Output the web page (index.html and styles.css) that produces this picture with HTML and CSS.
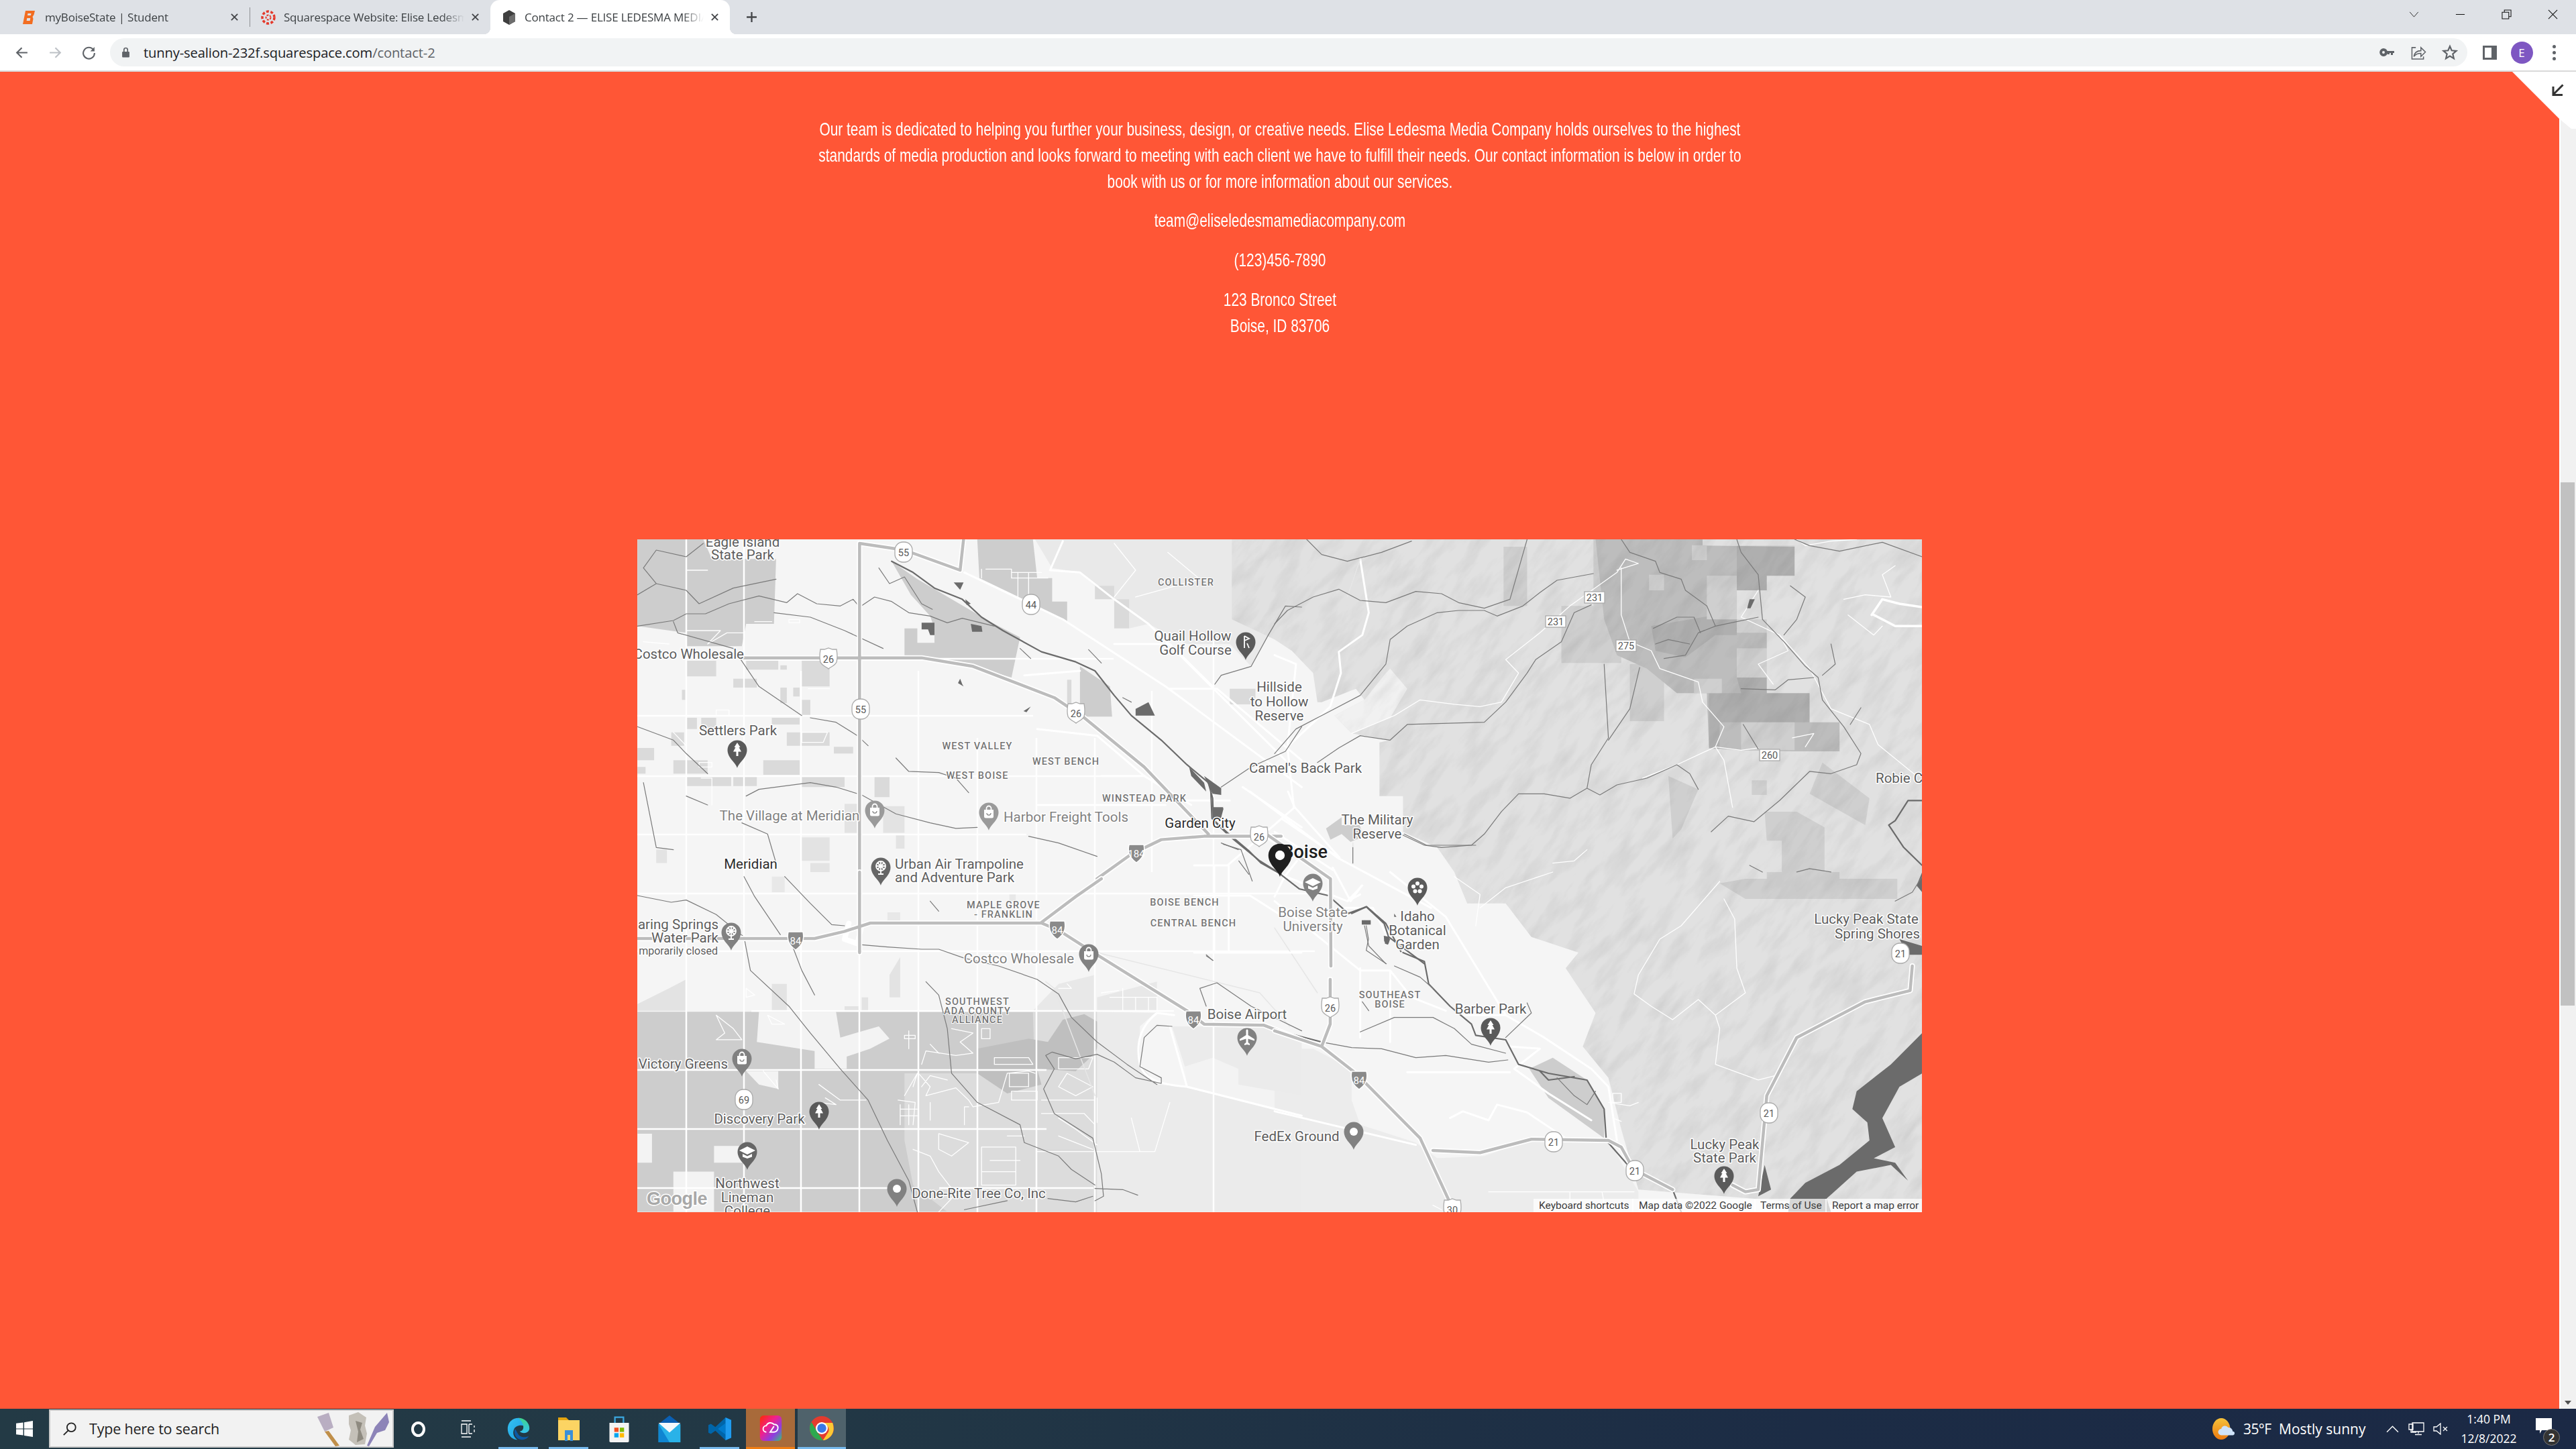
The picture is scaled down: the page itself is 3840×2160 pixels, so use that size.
FILE: index.html
```html
<!DOCTYPE html>
<html lang="en">
<head>
<meta charset="utf-8">
<title>Contact 2 — ELISE LEDESMA MEDIA COMPANY</title>
<link rel="stylesheet" href="styles.css">
</head>
<body>
<div class="screen">
  <header class="tabstrip">
    <div class="tab">
      <svg class="favicon" viewBox="0 0 24 24"><path class="fav-b" d="M6 2h14l-1.500 6-2 3 1 3-1.500 8H2z"/><path class="fav-hole" d="M9.500 6h5l-.6 3h-5zM8.300 13h5l-.7 4h-5z"/></svg>
      <span class="tab-title">myBoiseState | Student</span>
      <svg class="tab-close" viewBox="0 0 14 14"><path d="M2 2l10 10M12 2L2 12"/></svg>
    </div>
    <div class="tab tab-second">
      <svg class="favicon" viewBox="0 0 24 24"><g class="fav-canvas"><circle cx="12" cy="12" r="9" fill="none" stroke-dasharray="4 2.500" stroke-width="3.500"/><circle cx="12" cy="12" r="3.500" fill="none" stroke-dasharray="3 1.500" stroke-width="2"/></g></svg>
      <span class="tab-title">Squarespace Website: Elise Ledesma Media</span>
      <svg class="tab-close" viewBox="0 0 14 14"><path d="M2 2l10 10M12 2L2 12"/></svg>
    </div>
    <div class="tab tab-active">
      <svg class="favicon" viewBox="0 0 24 24"><path class="cube-a" d="M12 1l9 5v12l-9 5-9-5V6z"/><path class="cube-b" d="M12 11l9-5v12l-9 5z"/></svg>
      <span class="tab-title">Contact 2 — ELISE LEDESMA MEDIA COMPANY</span>
      <svg class="tab-close" viewBox="0 0 14 14"><path d="M2 2l10 10M12 2L2 12"/></svg>
    </div>
    <svg class="new-tab" viewBox="0 0 16 16"><path d="M8 1v14M1 8h14"/></svg>
    <div class="win-controls">
      <div class="win-cell"><svg viewBox="0 0 16 10" class="win-ic win-chev"><path d="M1 1l7 8 7-8"/></svg></div>
      <div class="win-cell"><svg viewBox="0 0 16 16" class="win-ic"><path d="M1 8h14"/></svg></div>
      <div class="win-cell"><svg viewBox="0 0 16 16" class="win-ic"><path d="M1 4.500h10.500V15H1zM4.500 4.500V1H15v10.500h-3.500"/></svg></div>
      <div class="win-cell"><svg viewBox="0 0 16 16" class="win-ic"><path d="M1 1l14 14M15 1L1 15"/></svg></div>
    </div>
  </header>

  <nav class="toolbar">
    <div class="nav-cell"><svg viewBox="0 0 20 20" class="nav-ic"><path d="M18 10H3M10 3l-7 7 7 7"/></svg></div>
    <div class="nav-cell"><svg viewBox="0 0 20 20" class="nav-ic nav-off"><path d="M2 10h15M10 3l7 7-7 7"/></svg></div>
    <div class="nav-cell"><svg viewBox="0 0 20 20" class="nav-ic"><path d="M16.500 6A8 8 0 1 0 18 10.500"/><path class="nav-solid" d="M18 2v6h-6z"/></svg></div>
    <div class="omnibox">
      <svg class="lock" viewBox="0 0 12 16"><path d="M2 7h8a1 1 0 0 1 1 1v6a1 1 0 0 1-1 1H2a1 1 0 0 1-1-1V8a1 1 0 0 1 1-1z"/><path class="lock-arc" d="M3.500 7V4.500a2.500 2.500 0 0 1 5 0V7"/></svg>
      <span class="url"><span class="url-host">tunny-sealion-232f.squarespace.com</span>/contact-2</span>
      <div class="omni-icons">
        <div class="omni-cell"><svg viewBox="0 0 22 12" class="ic-key"><path fill-rule="evenodd" d="M6 0a6 6 0 0 1 5.700 4H22v3h-2v3h-3V7h-2v2h-3V7.600A6 6 0 1 1 6 0zm0 4a2 2 0 1 0 0 4 2 2 0 0 0 0-4z"/></svg></div>
        <div class="omni-cell"><svg viewBox="0 0 24 22" class="ic-line"><path d="M8 3H2v18h18v-4M5 17c1-6 5-9 11-9V3l7 7-7 7v-5c-5 0-8 1-11 5z"/></svg></div>
        <div class="omni-cell"><svg viewBox="0 0 24 24" class="ic-star"><path d="M12 3l2.700 6.300 6.800.6-5.200 4.500 1.600 6.700-5.900-3.600-5.900 3.600 1.600-6.700L2.500 9.900l6.800-.6z"/></svg></div>
      </div>
    </div>
    <div class="tool-cell"><svg viewBox="0 0 21 21" class="ic-panel"><path fill-rule="evenodd" d="M0 0h21v21H0zM3 3v15h10V3z"/></svg></div>
    <div class="tool-cell"><span class="avatar">E</span></div>
    <div class="tool-cell"><span class="dots"><i></i><i></i><i></i></span></div>
  </nav>

  <div class="viewport">
    <main class="page">
      <section class="copy">
        <p>Our team is dedicated to helping you further your business, design, or creative needs. Elise Ledesma Media Company holds ourselves to the highest<br>standards of media production and looks forward to meeting with each client we have to fulfill their needs. Our contact information is below in order to<br>book with us or for more information about our services.</p>
        <p>team@eliseledesmamediacompany.com</p>
        <p>(123)456-7890</p>
        <p>123 Bronco Street<br>Boise, ID 83706</p>
      </section>
      <svg class="map" viewBox="950 804 1915 1003" xmlns="http://www.w3.org/2000/svg">
        <defs>
          <filter id="relief" x="-300" y="-300" width="4000" height="3000" filterUnits="userSpaceOnUse">
            <feTurbulence type="fractalNoise" baseFrequency=".016 .05" numOctaves="4" seed="7"/>
            <feColorMatrix type="matrix" values="0 0 0 0 0  0 0 0 0 0  0 0 0 0 0  1.500 0 0 0 -.62"/>
          </filter>
          <clipPath id="hillclip">
            <path transform="translate(1900 790) scale(.638 .3333)" d="M-100,42L1513,42L1513,1530L420,1530L380,1420L300,1350L300,1190L245,1190L245,950L270,940L180,910L140,830L210,760L190,710L110,770L100,770L90,640L40,540L0,490L-100,400Z"/>
            <path transform="translate(1900 1300) scale(.638 .3333)" d="M420,0L450,140L540,140L600,290L710,360L680,430L750,630L720,780L780,920L810,1150L850,1420L1513,1520L1513,0Z"/>
          </clipPath>
          <path id="pin" d="M0 27C-2 19-14.500 12-14.500 0A14.500 14.500 0 0 1 14.500 0C14.500 12 2 19 0 27Z"/>
          <path id="g-tree" class="gly" d="M0-11L-4.500-4H-2.500L-6 2.500H-1.500V9H1.500V2.500H6L2.500-4H4.500Z"/>
          <g id="g-bag"><path class="gly" d="M-7-4H7V6A2.500 2.500 0 0 1 4.500 8.500H-4.500A2.500 2.500 0 0 1-7 6Z"/><path class="gly-line" d="M-3.500-4V-6A3.500 3.500 0 0 1 3.500-6V-4"/><path class="gly-dark" d="M-3 1A3 3 0 0 0 3 1"/></g>
          <g id="g-cap"><path class="gly" d="M0-8L12-2 0 4-12-2Z"/><path class="gly" d="M-7 3L0 6.500 7 3V7.500L0 10-7 7.500Z"/></g>
          <path id="g-plane" class="gly" d="M-1.500-11C-1.500-13 1.500-13 1.500-11V-4L11 2V4.500L1.500 1.500V7L4 9V11L0 10-4 11V9L-1.500 7V1.500L-11 4.500V2L-1.500-4Z"/>
          <g id="g-flower" class="gly"><circle cy="-6" r="3"/><circle cx="-6" cy="-1.500" r="3"/><circle cx="6" cy="-1.500" r="3"/><circle cx="-3.500" cy="5.500" r="3"/><circle cx="3.500" cy="5.500" r="3"/></g>
          <g id="g-wheel"><circle class="gly-line" r="7" cy="-2"/><path class="gly-line" d="M0-9V10M-7-2H7M-5-7L5 3M5-7L-5 3M-4 10H4"/></g>
          <g id="g-golf"><path class="gly-line" d="M-2-9V9M-2-9L5-5-2-2"/><path class="gly-line" d="M2 2L5 9"/></g>
          <circle id="g-dot" class="gly" r="6"/>
          <path id="sh-us" d="M-12-14H-6L0-16 6-14H12C13-8 14-2 12 5 9 11 3 12 0 15-3 12-9 11-12 5-14-2-13-8-12-14Z"/>
          <path id="sh-i" d="M-11-13H11C13-4 12 6 0 14-12 6-13-4-11-13Z"/>
        </defs>

        <rect class="m-base" x="950" y="804" width="1915" height="1003"/>

        <!-- farmland, lower left -->
        <g transform="translate(940 1300) scale(.638 .3333)">
          <path class="m-farm" d="M16,625L1090,625L1090,1520L16,1520Z"/>
          <path class="m-pale" d="M300,625L480,625L490,740L580,690L605,745L560,790L505,825L505,880L430,880L430,800L295,760Z"/>
          <path class="m-pale" d="M16,640L120,640 M16,1170L50,1170L50,1300L16,1300Z M100,1340L195,1340L195,1520L100,1520Z M195,1225L265,1225L265,1300L195,1300Z"/>
          <path class="m-pale" d="M270,890L345,890L345,970L300,950Z"/>
          <path class="m-soft" d="M640,900L950,900L950,1240L1090,1240L1090,1520L740,1520L660,1400L640,1200Z"/>
          <path class="m-soft" d="M940,625L1090,625L1090,1240L950,1240Z"/>
          <path class="m-deep" d="M810,790L930,745L975,760L1010,660L1060,635L1110,690L1085,810L1040,890L950,880L960,950L880,990L810,900Z"/>
          <path class="m-band" d="M1090,625L1225,630L1190,690L1190,860L1230,950L1300,960L1568,1090L1568,1520L1090,1520Z"/>
          <path class="m-pale" d="M1295,870L1360,830L1420,880L1420,950L1568,1000L1568,1090L1300,965Z"/>
          <path class="m-band" d="M1265,690L1480,690L1568,760L1568,1000L1420,950L1420,880L1360,830L1295,870Z"/>
          <path class="m-patch" d="M605,560L630,560L630,380L605,460Z M330,500L365,500L365,620L330,620Z M500,600L535,600L535,620L500,620Z M90,520L130,480L130,620L16,620L16,590Z M540,560L555,560L555,620L540,620Z"/>
          <path class="m-patch2" d="M1000,500L1085,460L1085,620L940,620Z M1090,560L1230,490L1230,620L1090,620Z M330,90L360,90L360,20L330,20Z M600,240L630,240L630,180L600,180Z M885,95L900,95L900,130L885,130Z"/>
        </g>

        <!-- farmland, upper left -->
        <g transform="translate(940 790) scale(.638 .3333)">
          <path class="m-farm" d="M16,42L170,42L190,130L340,130L335,420L270,420L260,520L130,520L130,460L16,430Z"/>
          <path class="m-farm" d="M810,42L940,42L950,215L985,215L985,320L1020,320L1020,410L950,340L815,215Z"/>
          <path class="m-farm" d="M640,440L670,440L670,505L710,505L710,440L700,385L655,290L610,140L670,220L840,410L910,480L890,660L790,605L680,565L640,565Z"/>
          <path class="m-farm" d="M1050,610L1120,700L1125,835L1050,835Z"/>
          <path class="m-farm2" d="M130,585H200V655H130Z M270,585H345V625H270Z M240,665H295V705H240Z M350,605H365V625H350Z M400,585H465V700H400Z M350,705H365V775H350Z M380,705H395V745H380Z M400,760H420V830H400Z M130,840H155V890H130Z M165,840H200V900H165Z M330,840H395V870H330Z M365,905H465V965H365Z M475,970H520V1000H475Z M100,1030H130V1090H100Z M115,1030H180V1090H115Z M310,1030H395V1095H310Z M130,1105H235V1145H130Z M240,1105H295V1145H240Z M400,1105H500V1150H400Z M570,1105H605V1195H570Z M1020,670H1030V780H1020Z M16,975H55V1030H16Z M16,1060H35V1090H16Z M120,715H128V760H120Z M95,905H125V965H95Z"/>
          <path class="m-patch" d="M620,1365H640V1425H620Z M590,1235H640V1355H590Z M500,1225H535V1355H500Z M60,1430H85V1490H60Z M400,1375H465V1480H400Z M420,1490H465V1530H420Z"/>
          <path class="m-hill2" d="M945,42L985,170L1050,190L1085,250L1130,310L1165,370L1165,440L1210,420L1300,510L1400,510L1450,610L1490,470L1530,340L1568,345L1568,42Z"/>
          <path class="m-farm2" d="M1085,250H1130V310H1085Z M1130,310H1165V440H1130Z M1400,710H1460V780H1400Z"/>
        </g>

        <!-- hills -->
        <g transform="translate(1900 790) scale(.638 .3333)">
          <path class="m-hill" d="M-100,42L1513,42L1513,1530L420,1530L380,1420L300,1350L300,1190L245,1190L245,950L270,940L180,910L140,830L210,760L190,710L110,770L100,770L90,640L40,540L0,490L-100,400Z"/>
          <path class="m-band2" d="M270,620L310,710L270,840L180,910L140,830L210,760L260,640Z"/>
          <path class="m-shade1" d="M535,75H590V340H535Z M670,340H810V595H670Z M745,42H810V595H745Z M830,600H910V855H830Z"/>
          <path class="m-shade2" d="M750,42L1000,42L1000,70L1215,75L1215,205L1150,205L1150,270L1080,270L1080,400L1150,460L1150,530L1080,530L1080,660L1150,660L1150,730L1250,730L1250,860L1320,860L1320,990L1210,990L1080,985L1015,975L1010,730L940,730L870,620L800,560L770,400Z"/>
          <path class="m-shade3" d="M880,430L1030,380L1030,470L960,570L890,540Z M1015,730H1250V860H1040L1040,980H1015Z M1080,70H1215V205H1150V270H1080Z M1080,660H1150V730H1090Z M1030,400H1080V470H1030Z"/>
          <path class="m-shade-lite" d="M975,68H1010V135H975Z M875,200H910V270H875Z M1010,205H1080V400H1010Z M1080,530H1150V660H1080Z M1080,400H1150V460H1080Z M980,665H1045V730H980Z M1090,860H1215V985H1090Z"/>
          <path class="m-shade1" d="M1115,1120H1150V1185H1115Z M1145,1260H1220L1285,1330V1390H1150Z M1185,1390H1285V1530H1185Z M920,1100L990,1160L950,1340L930,1380Z M1280,1040L1390,1200L1380,1320L1250,1180Z"/>
        </g>
        <g transform="translate(1900 1300) scale(.638 .3333)">
          <path class="m-hill" d="M420,0L450,140L540,140L600,290L710,360L680,430L750,630L720,780L780,920L810,1150L850,1420L1513,1520L1513,0Z"/>
          <path class="m-band" d="M0,790L90,790L180,880L180,1020L200,1130L330,1210L380,1280L490,1270L610,1190L780,1200L850,1430L850,1520L0,1520Z" opacity=".9"/>
          <path class="m-shade1" d="M1040,50L1100,30H1455V120H1100Z M1150,0H1320V50H1150Z"/>
          <path class="m-farm" d="M595,880L650,830L730,930L770,1060L770,1190L640,1010Z"/>
        </g>
        <g clip-path="url(#hillclip)">
          <rect class="m-tex" x="1600" y="300" width="1900" height="1800" transform="rotate(-52 2400 1200)" filter="url(#relief)"/>
        </g>
        <g transform="translate(1780 1180) scale(.3333)">
          <path class="m-farm" d="M590,165L660,115L660,190L610,215Z M660,150L740,150L760,200L700,225L660,190Z"/>
        </g>

        <!-- minor roads -->
        <path class="m-grid" d="M950 1244H1530M950 1157H1700M950 1067H1540M1140 982H1660M950 1332H1960M950 1418H1960M1120 1507H1750M950 1595H1560M950 1683H1560M950 1771H1340M1400 1771H1630M1023 804V1807M1109 804V1807M1194 1000V1807M1281 1000V1807M1369 1000V1807M1457 1100V1807M1545 1100V1807M1632 1100V1807M1809 950V1807M1717 1030V1300"/>

        <g transform="translate(940 1300) scale(.638 .3333)">
          <path class="m-trail" d="M625,1020L665,1030L660,1130M640,1000L670,900L660,960M675,905L700,960L690,1000L760,965L790,1020L800,1050L860,1030L880,900L930,890L945,900M680,960L700,910L740,930M750,700L800,720L770,760L800,810L760,820L690,800L680,860M700,770L720,810M820,700H840V745H820ZM640,730H665V745H640ZM650,710V790M850,830L880,830L930,830L940,860L850,860ZM885,900H930V960H885ZM890,980H950V1020H890ZM720,1170L790,1210L750,1270L720,1240ZM660,1240L700,1270L720,1340L760,1440L720,1520M820,1230H900V1400H820ZM840,1290H910M820,1340H900M960,1020H1085M960,1080L1060,1080L1085,1130M1000,830L1080,830L1070,880H1000ZM1020,900L1080,960L1040,1000L1000,960ZM1000,1100L1040,1150L1090,1220M950,1250H1225L1260,1030M1190,1250L1170,1100"/>
          <path class="m-trail" d="M200,640L240,700L260,750H200L220,720ZM320,640L330,680H360ZM440,950L490,1020L510,1020L550,1020M455,1010L480,1040L440,1030M310,890L345,970L340,930M270,520L290,550L270,560ZM630,1040V1130M650,1040V1130M630,1060H670M630,1090H670M880,1180H920M790,1050H780V1130M700,1030V1110M1090,1120V1010M1000,1180L1080,1240M1120,560H1230V620M1150,520V620M1180,560V620M1210,560V620M1100,540L1140,530M1020,500L1030,520H1000"/>
          <path class="m-road" d="M1190,860C1180,770 1190,690 1230,630L1270,640M1300,960L1568,1090M1190,860C1200,930 1240,950 1300,960M1260,690L1300,960"/>
          <path class="m-roadlite" d="M1540,690L1470,540L1090,360M970,490L990,520L1085,1000"/>
        </g>
        <g transform="translate(940 790) scale(.638 .3333)">
          <path class="m-road" d="M780,190L1010,400L1250,700L1568,1150M1260,710H1370L1568,1030M1130,510H1260L1360,700M920,650L1050,630M950,890L1090,920L1200,1100M1100,1100H1200L1310,1230M1260,1210H1400M950,1230L1250,1230M1010,50L980,180L1050,190L1130,310L1210,420L1530,1030M1430,1150L1568,1330"/>
          <path class="m-trail" d="M830,175H890L890,215H975M820,175V215M890,190L960,190M905,190V300M930,190V300M180,180H130M130,450L210,450L180,510L225,460L265,460M200,805H230V830H200ZM290,410L330,410M415,710H465M370,400H395V415H370ZM100,905L130,965M400,905H460L450,950H400ZM160,1040L190,1040L190,1060L160,1060ZM165,1110H190V1230M30,500L90,510M1130,60L1180,180L1130,300M1255,100L1330,220L1180,300"/>
        </g>
        <g transform="translate(1900 790) scale(.638 .3333)">
          <path class="m-road" d="M200,130L210,250L220,370L205,470L150,545L155,640L130,790L30,970L45,1240M0,560L50,600L30,970"/>
          <path class="m-roadlite" d="M183,1400V1490M170,300L200,130"/>
          <path class="m-hw-white" d="M1395,380L1420,310L1460,330L1513,345M1400,380L1450,430L1513,430"/>
          <path class="m-trail" d="M800,180L850,150L820,130L800,190L690,340L620,460L540,580L570,640L530,770L480,790L420,780L340,760L280,830L180,910M810,170L810,380L830,500L880,540L900,620L990,680L1000,770L1050,880L1030,970L1090,985L1130,975M1030,970L1050,1030L1070,1240M1130,270L1090,390L1180,470L1200,540L1130,600L1165,690M1180,470L1250,620L1300,800L1390,870L1410,960L1500,1100M1330,310L1380,290L1440,300L1420,200L1450,160M1340,380L1400,470L1420,430M1220,42L1240,70L1300,50L1360,42M1210,930L1260,910L1240,970M1030,970L940,1050L860,1110M730,1430L700,1480L650,1490"/>
        </g>
        <g transform="translate(1900 1300) scale(.638 .3333)">
          <path class="m-road" d="M0,1070L330,1220M540,640L630,740L740,880L780,960L800,1200M540,640L440,640M200,440L270,440L320,560L400,620M310,895L550,895M200,430V740M270,440V760M550,780L620,790L560,880L640,990L740,1110M410,1100L440,1070L500,1110L520,1040L590,1075L680,1190M0,130L200,440M0,0L170,130L200,100M205,60L170,130M270,0L400,200L540,640"/>
          <path class="m-trail" d="M1040,42L950,240L900,300L850,460L840,545L880,600L930,660L990,570L1030,640L1040,700L1030,860L1130,930L1170,910M1050,120L1075,210L1080,430L1100,540L1030,640M420,20L480,100L470,240M650,0L540,70L480,160M790,990H810V1030H790ZM780,1030L830,1045L850,1030M790,1100L810,1115M690,1430V1480M765,1430L770,1480M500,1430L840,1430M370,1490L390,1510"/>
          <path class="m-roadlite" d="M0,250L100,540"/>
        </g>
        <g transform="translate(1780 1180) scale(.3333)">
          <path class="m-road" d="M250,0L640,295L1060,520M420,0L450,70L650,295M450,70L150,330H0M155,330V720M90,330V720M0,465H250L400,560M0,720H480M360,470L405,380L460,310M390,120L640,290M360,180L620,350M330,210L590,380M700,490L750,420M620,340L700,490M640,520H800L860,640"/>
        </g>

        <!-- water -->
        <g transform="translate(940 790) scale(.638 .3333)">
          <path class="m-water" d="M680,415H710V470H700L695,445H680ZM795,420L820,430L822,455H798ZM755,235L778,235L770,268ZM782,310L795,330L785,335ZM1180,800L1210,770L1225,830H1180ZM1340,1100L1380,1155L1380,1185L1360,1180ZM1360,1240L1385,1240L1372,1295L1360,1290ZM1305,1060L1340,1130L1345,1170L1310,1100ZM770,665L775,690L778,700L765,685ZM918,810L935,790L925,815Z"/>
          <path class="m-river" d="M610,140L660,190L710,260L775,310L820,390L870,450L960,545L1040,590L1085,630L1130,740L1170,830L1240,940L1300,1050L1350,1130L1360,1200L1362,1300L1400,1370L1470,1480L1520,1540"/>
          <path class="m-stream" d="M16,430L100,405L130,375L175,375L230,330L300,295L365,325L390,285L435,330L490,340L520,310L535,345L570,300L610,320L650,370L700,385L740,415L775,395L850,430M16,290L60,240L30,170L60,90L130,120L170,60M60,240L130,270L160,330L240,260L340,220M100,410L110,460L240,530L300,700L400,830M420,840L480,860L530,920L555,965M335,370L420,390L500,450L590,530M620,1020L650,1080L720,1085L760,1110L790,1175M16,880L100,940L130,1000L180,1090M30,1130L60,1420L100,1430M270,1190L300,1160L420,1130L480,1150L540,1185L620,1270L700,1310L760,1335L810,1330M930,1370L1000,1400L1090,1460M1365,690L1380,650L1450,610L1490,470L1530,340L1568,345M1380,1150L1450,1060L1530,990L1568,880M580,170L605,240L640,210L680,330L705,355M910,530L935,575M1070,535L1100,595M1150,750L1170,770M130,1190L180,1230M260,1310L320,1360L340,1490M1380,1400L1420,1430"/>
        </g>
        <g transform="translate(940 1300) scale(.638 .3333)">
          <path class="m-stream" d="M16,105L95,135L130,125L200,190L265,290L280,440L370,600L420,720L490,880L555,1020L600,1200L650,1380L670,1520M265,20L290,110L350,280M360,20L420,140L470,235L500,240M380,340L400,440L430,550M540,325L600,335L680,345L720,345L780,385L860,420L950,480L1000,545L1030,650L1090,760L1160,860L1230,950M690,490L720,550L740,700L750,900L810,1030L910,1130L920,1210L1000,1270L1030,1330L1085,1400M970,820L985,805L1040,835L1090,815L1130,850L1180,920L1240,945L1240,920L1190,870L1200,740L1230,685L1265,690M970,820L990,880L965,970L990,1080L1080,1190L1100,1350L1105,1450L1085,1470M1085,1415L1150,1420L1185,1445M780,1510L880,1470M975,1460L1040,1475L1080,1450M1330,520L1370,495L1450,600L1568,710M1330,520L1345,600M700,130L720,175M1345,370L1360,395"/>
        </g>
        <g transform="translate(1780 1180) scale(.3333)">
          <path class="m-river" d="M75,0L80,120L150,185L245,265L300,320L380,365L470,435L600,465L690,545L770,515L850,590L870,650L1030,770"/>
          <path class="m-water" d="M82,75H132L120,120H85ZM750,575H790V595H750ZM850,645L875,650L870,680L850,670ZM895,545L905,560L895,560Z"/>
          <path class="m-stream" d="M130,235L210,260L260,400M200,310L245,370M770,600L780,660L770,710L860,770M710,250V320M940,190L1040,240L1260,240M55,735L85,755"/>
        </g>
        <g transform="translate(1900 790) scale(.638 .3333)">
          <path class="m-stream" d="M75,42L110,110L170,140L250,100L320,50M0,420L30,360L90,300L150,265L200,315L260,325L330,275L390,285L430,325L490,350L550,310L590,42M745,195L660,225L620,280L580,340L520,385L490,360L430,360L380,370L310,430L270,490L260,600L200,740L130,810L50,890L0,1000M740,335L700,370L670,500L610,580L590,640L540,770L490,860L310,870L270,940L200,920L150,975L100,1040M770,600L780,930L740,1050L730,1155L690,1200L630,1180L570,1180L530,1260L490,1360L460,1410L390,1420L350,1410L300,1365M853,615L830,800L780,940M730,1155L760,1185L800,1140L870,1110L940,1050L970,1090L990,1160M1020,1350L1060,1280L1120,1305L1180,1210L1250,1080L1300,1090L1360,1050L1370,1000L1330,880L1280,760L1270,660L1240,610L1190,500L1140,400L1130,200L1090,100L1080,42M810,42L830,100L890,140L900,190L950,220L960,270L1010,340L1030,430L1080,410L1130,390M1030,430L990,460L960,560L910,575M890,510L920,490L970,510M885,440L940,390L980,390L995,460M1090,710L1170,715L1200,670L1260,660M1205,250L1240,300L1220,400L1190,470M1300,510L1310,600L1280,650M1095,870L1130,980M1345,870L1370,795M1215,42L1250,70L1320,95L1420,55L1513,120M1110,1500L1140,1530M1220,1530L1250,1515L1300,1530"/>
          <path class="m-river" d="M1513,1210L1480,1210L1450,1300L1435,1320L1470,1420L1513,1500"/>
          <path class="m-water" d="M1110,310H1122L1112,350H1104Z"/>
        </g>
        <g transform="translate(1900 1300) scale(.638 .3333)">
          <path class="m-water" d="M1513,720L1440,860L1360,980L1350,1060L1385,1120L1390,1200L1320,1310L1240,1390L1205,1460L1200,1520L1300,1520L1290,1460L1360,1340L1440,1310L1480,1380L1450,1300L1400,1280L1450,1230L1420,1100L1460,960L1513,900Z"/>
          <path class="m-water" d="M1145,1310L1130,1450L1160,1420ZM1460,300L1513,330L1513,370L1480,370ZM1513,0L1500,60L1513,90ZM210,215L225,225L215,235L205,230ZM255,285L270,300L265,325L258,320Z"/>
          <path class="m-river" d="M300,360L350,400L360,500L410,600L460,680L470,730L540,750L570,860L640,900L730,930L770,1060L775,1200L830,1320L930,1420L950,1520M180,185L215,155L260,230L295,355M620,890L640,930L700,915M0,705L110,760"/>
          <path class="m-stream" d="M110,760L180,785L250,790L330,830L400,820L500,850L545,840M200,715L280,650L370,650L420,700L460,770L540,810M590,585L600,630L540,740M210,240L220,330L260,410M280,420L340,470L370,520M1450,130L1490,90L1513,20M660,920L700,1000L730,1040L750,980M205,580L220,620"/>
        </g>

        <!-- highways -->
        <g transform="translate(940 790) scale(.638 .3333)">
          <path class="m-hw-edge" d="M778,42L770,180L640,90L535,60V1560M265,572H680L800,610L990,750L1060,840L1200,1060L1350,1360M1090,1560L1170,1450L1240,1385L1340,1370L1520,1370"/>
          <path class="m-hw" d="M778,42L770,180L640,90L535,60V1560M265,572H680L800,610L990,750L1060,840L1200,1060L1350,1360M1090,1560L1170,1450L1240,1385L1340,1370L1520,1370"/>
        </g>
        <g transform="translate(940 1300) scale(.638 .3333)">
          <path class="m-hw-edge" d="M535,0V360M16,297H430L500,265L560,228H960L1000,260L1090,370L1300,620L1340,680L1480,685L1568,750M960,225L1040,110L1100,30M510,230L500,300L530,320L540,240"/>
          <path class="m-hw" d="M535,0V360M16,297H430L500,265L560,228H960L1000,260L1090,370L1300,620L1340,680L1480,685L1568,750M960,225L1040,110L1100,30"/>
        </g>
        <g transform="translate(1780 1180) scale(.3333)">
          <path class="m-hw-edge" d="M330,195L610,390L612,780"/>
          <path class="m-hw" d="M330,195L610,390L612,780"/>
        </g>
        <g transform="translate(1900 1300) scale(.638 .3333)">
          <path class="m-hw-edge" d="M130,480V680L110,780M0,710L110,780L190,900L340,1190L415,1500M370,1245L480,1255L600,1195L780,1200L810,1230L830,1300M860,1350L930,1420M1490,420L1485,530L1380,580L1220,740L1150,1000L1130,1420L1100,1430L1070,1400"/>
          <path class="m-hw" d="M130,480V680L110,780M0,710L110,780L190,900L340,1190L415,1500M370,1245L480,1255L600,1195L780,1200L810,1230L830,1300M860,1350L930,1420M1490,420L1485,530L1380,580L1220,740L1150,1000L1130,1420L1100,1430L1070,1400"/>
        </g>

        <!-- shields -->
        <g class="shield"><rect x="1334" y="808" width="26" height="30" rx="12"/><text x="1347" y="829">55</text></g>
        <g class="shield"><rect x="1270" y="1042" width="26" height="30" rx="12"/><text x="1283" y="1063">55</text></g>
        <g class="shield"><rect x="1524" y="886" width="26" height="30" rx="12"/><text x="1537" y="907">44</text></g>
        <g class="shield"><use href="#sh-us" x="1235" y="982"/><text x="1235" y="988">26</text></g>
        <g class="shield"><use href="#sh-us" x="1604" y="1063"/><text x="1604" y="1069">26</text></g>
        <g class="shield"><use href="#sh-us" x="1877" y="1247"/><text x="1877" y="1253">26</text></g>
        <g class="shield"><use href="#sh-us" x="1983" y="1502"/><text x="1983" y="1508">26</text></g>
        <g class="shield-i"><use href="#sh-i" x="1694" y="1272"/><text x="1694" y="1278">184</text></g>
        <g class="shield-i"><use href="#sh-i" x="1186" y="1402"/><text x="1186" y="1408">84</text></g>
        <g class="shield-i"><use href="#sh-i" x="1576" y="1386"/><text x="1576" y="1392">84</text></g>
        <g class="shield-i"><use href="#sh-i" x="1779" y="1520"/><text x="1779" y="1526">84</text></g>
        <g class="shield-i"><use href="#sh-i" x="2026" y="1610"/><text x="2026" y="1616">84</text></g>
        <g class="shield"><rect x="2303" y="1687" width="26" height="30" rx="12"/><text x="2316" y="1708">21</text></g>
        <g class="shield"><rect x="2424" y="1730" width="26" height="30" rx="12"/><text x="2437" y="1751">21</text></g>
        <g class="shield"><rect x="2624" y="1644" width="26" height="30" rx="12"/><text x="2637" y="1665">21</text></g>
        <g class="shield"><rect x="2820" y="1406" width="26" height="30" rx="12"/><text x="2833" y="1427">21</text></g>
        <g class="shield"><rect x="1096" y="1624" width="26" height="30" rx="12"/><text x="1109" y="1645">69</text></g>
        <g class="shield"><use href="#sh-us" x="2165" y="1803"/><text x="2165" y="1809">30</text></g>
        <g class="shield-sq"><rect x="2362" y="882" width="30" height="17"/><text x="2377" y="896">231</text></g>
        <g class="shield-sq"><rect x="2304" y="918" width="30" height="17"/><text x="2319" y="932">231</text></g>
        <g class="shield-sq"><rect x="2409" y="954" width="30" height="17"/><text x="2424" y="968">275</text></g>
        <g class="shield-sq"><rect x="2623" y="1117" width="30" height="17"/><text x="2638" y="1131">260</text></g>

        <!-- attribution strip -->
        <rect class="m-attr" x="2286" y="1787" width="579" height="20"/>
        <path class="m-attr-sep" d="M2434 1787V1807M2616 1787V1807M2722 1787V1807"/>
        <text class="attr" x="2294" y="1802">Keyboard shortcuts</text>
        <text class="attr" x="2443" y="1802">Map data ©2022 Google</text>
        <text class="attr" x="2624" y="1802">Terms of Use</text>
        <text class="attr" x="2731" y="1802">Report a map error</text>
        <text class="g-logo" x="964" y="1796">Google</text>

        <!-- labels -->
        <g class="lb">
          <text x="1107" y="815">Eagle Island</text><text x="1107" y="834">State Park</text>
          <text class="end" x="1109" y="982">Costco Wholesale</text>
          <text x="1778" y="955">Quail Hollow</text><text x="1782" y="976">Golf Course</text>
          <text x="1907" y="1031">Hillside</text><text x="1907" y="1053">to Hollow</text><text x="1907" y="1074">Reserve</text>
          <text x="1946" y="1152">Camel's Back Park</text>
          <text x="1100" y="1096">Settlers Park</text>
          <text x="2053" y="1229">The Military</text><text x="2053" y="1250">Reserve</text>
          <text class="pale" x="1177" y="1223">The Village at Meridian</text>
          <text class="pale" x="1589" y="1225">Harbor Freight Tools</text>
          <text x="1430" y="1295">Urban Air Trampoline</text><text x="1423" y="1315">and Adventure Park</text>
          <text class="end" x="1071" y="1385">aring Springs</text><text class="end" x="1071" y="1405">Water Park</text>
          <text class="end small" x="1070" y="1423">mporarily closed</text>
          <text class="pale" x="1519" y="1436">Costco Wholesale</text>
          <text x="1859" y="1519">Boise Airport</text>
          <text class="pale" x="1957" y="1367">Boise State</text><text class="pale" x="1957" y="1388">University</text>
          <text x="2113" y="1373">Idaho</text><text x="2113" y="1394">Botanical</text><text x="2113" y="1415">Garden</text>
          <text x="2222" y="1511">Barber Park</text>
          <text class="end" x="2860" y="1377">Lucky Peak State</text><text class="end" x="2862" y="1399">Spring Shores</text>
          <text x="2571" y="1713">Lucky Peak</text><text x="2571" y="1733">State Park</text>
          <text class="end" x="1085" y="1593">Victory Greens</text>
          <text x="1132" y="1675">Discovery Park</text>
          <text x="1114" y="1771">Northwest</text><text x="1114" y="1792">Lineman</text><text x="1114" y="1812">College</text>
          <text x="1459" y="1786">Done-Rite Tree Co, Inc</text>
          <text x="1933" y="1701">FedEx Ground</text>
          <text class="start" x="2796" y="1167">Robie Creek</text>
          <text class="dark" x="1789" y="1234">Garden City</text>
          <text class="dark" x="1119" y="1295">Meridian</text>
          <text class="city end" x="1979" y="1279">Boise</text>
        </g>
        <g class="hood">
          <text x="1768" y="873">COLLISTER</text>
          <text x="1457" y="1117">WEST VALLEY</text>
          <text x="1589" y="1140">WEST BENCH</text>
          <text x="1457" y="1161">WEST BOISE</text>
          <text x="1706" y="1195">WINSTEAD PARK</text>
          <text x="1496" y="1354">MAPLE GROVE</text><text x="1496" y="1368">- FRANKLIN</text>
          <text x="1766" y="1350">BOISE BENCH</text>
          <text x="1779" y="1381">CENTRAL BENCH</text>
          <text x="1457" y="1498">SOUTHWEST</text><text x="1457" y="1512">ADA COUNTY</text><text x="1457" y="1525">ALLIANCE</text>
          <text x="2072" y="1488">SOUTHEAST</text><text x="2072" y="1502">BOISE</text>
        </g>

        <!-- pins -->
        <g transform="translate(1857 957)"><use class="pin-park" href="#pin"/><use href="#g-golf"/></g>
        <g transform="translate(1099 1118)"><use class="pin-park" href="#pin"/><use href="#g-tree"/></g>
        <g transform="translate(1304 1208)"><use class="pin-shop-lt" href="#pin"/><use href="#g-bag"/></g>
        <g transform="translate(1474 1211)"><use class="pin-shop-lt" href="#pin"/><use href="#g-bag"/></g>
        <g transform="translate(1313 1293)"><use class="pin-mid" href="#pin"/><use href="#g-wheel"/></g>
        <g transform="translate(1090 1390)"><use class="pin-shop" href="#pin"/><use href="#g-wheel"/></g>
        <g transform="translate(1623 1422)"><use class="pin-shop" href="#pin"/><use href="#g-bag"/></g>
        <g transform="translate(1859 1547)"><use class="pin-shop" href="#pin"/><use href="#g-plane"/></g>
        <g transform="translate(1106 1578)"><use class="pin-shop" href="#pin"/><use href="#g-bag"/></g>
        <g transform="translate(1221 1657)"><use class="pin-park" href="#pin"/><use href="#g-tree"/></g>
        <g transform="translate(1114 1717)"><use class="pin-mid" href="#pin"/><use href="#g-cap"/></g>
        <g transform="translate(1337 1772)"><use class="pin-shop" href="#pin"/><use href="#g-dot"/></g>
        <g transform="translate(2018 1687)"><use class="pin-shop" href="#pin"/><use href="#g-dot"/></g>
        <g transform="translate(1957 1317)"><use class="pin-shop" href="#pin"/><use href="#g-cap"/></g>
        <g transform="translate(2113 1323)"><use class="pin-park" href="#pin"/><use href="#g-flower"/></g>
        <g transform="translate(2222 1532)"><use class="pin-park" href="#pin"/><use href="#g-tree"/></g>
        <g transform="translate(2570 1753)"><use class="pin-park" href="#pin"/><use href="#g-tree"/></g>
        <g transform="translate(1908 1275) scale(1.190)"><use class="pin-main" href="#pin"/><circle class="gly" r="6"/></g>
      </svg>
    </main>
    <aside class="scrollbar">
      <span class="scroll-thumb"></span>
      <span class="scroll-down"></span>
    </aside>
    <div class="fold">
      <svg class="fold-arrow" viewBox="0 0 18 18"><path d="M16.500 1.500L3 15M2 4v12.500h14"/></svg>
    </div>
  </div>

  <footer class="taskbar">
    <div class="start"><svg viewBox="0 0 26 25" class="win-logo"><path d="M0 4l11-1.500v9.500H0zM12.500 2.300L26 0v12H12.500zM0 13h11v9.500L0 21zM12.500 13H26v12l-13.500-2.200z"/></svg></div>
    <div class="search">
      <svg viewBox="0 0 24 24" class="search-ic"><circle cx="14.500" cy="9.500" r="7"/><path d="M9.500 14.500L2 22"/></svg>
      <span class="search-text">Type here to search</span>
      <svg viewBox="0 0 110 52" class="search-art">
        <path fill="#b9aec2" d="M3 8L20 2 27 24 14 30z"/><path fill="#c08f4a" d="M14 30l6-1 16 22-6 1z"/>
        <path fill="#c4c0b8" d="M50 6l14-5 12 8-2 12 3 12-3 16-14 1-10-8 3-14-3-9z"/><path fill="#8e8a80" d="M60 14l10 3-3 10 5 14-10 5 2-16z"/>
        <path fill="#8d84b8" d="M107 2l3 14-6 12-12 4-12 20-3-1 12-28z"/>
      </svg>
    </div>
    <div class="task-cell"><span class="cortana"></span></div>
    <div class="task-cell"><svg viewBox="0 0 24 26" class="taskview"><path d="M3 1h14M3 25h14M3 6h8v14H3zM14 6h5M14 20h5M22 8v3M22 14v4M14 6v14"/></svg></div>
    <div class="app app-first app-on">
      <svg viewBox="0 0 40 40" class="app-ic"><defs><linearGradient id="eg" x1="0" y1="0" x2="1" y2="1"><stop offset="0" stop-color="#35c1f1"/><stop offset="1" stop-color="#1b9de2"/></linearGradient><linearGradient id="eg2" x1="0" y1="0" x2="0" y2="1"><stop offset="0" stop-color="#3dd48a"/><stop offset="1" stop-color="#35c1f1"/></linearGradient></defs><path fill="url(#eg)" d="M20 2C9 2 2 10 2 20c0 10 7 18 16 18-6-4-8-10-6-16 2-7 10-9 17-7 0-6-3-13-9-13z"/><path fill="url(#eg2)" d="M20 2c10 0 18 8 18 17 0 5-4 8-9 8-3 0-6-1-7-3 4 0 6-3 6-7 0-8-8-15-8-15z"/><path fill="#0c59a4" d="M14 20c-3 8 2 18 12 18 5 0 9-2 11-6-6 3-15 2-18-4-2-3-3-6-5-8z"/></svg>
    </div>
    <div class="app app-on">
      <svg viewBox="0 0 36 40" class="app-ic"><path fill="#e4a40f" d="M2 3h12l4 4h-16z"/><path fill="#fcd463" d="M2 7h32v30H2z"/><path fill="#3a8fd8" d="M12 22h12v16h-4v-9h-4v9h-4z"/></svg>
    </div>
    <div class="app">
      <svg viewBox="0 0 36 44" class="app-ic"><path fill="#f3f3f3" d="M2 12h32v30a2 2 0 0 1-2 2H4a2 2 0 0 1-2-2z"/><path fill="none" stroke="#3ba7e0" stroke-width="2.500" d="M11 12V3h14v9"/><path fill="#f25022" d="M10 20h7v7h-7z"/><path fill="#7fba00" d="M19 20h7v7h-7z"/><path fill="#00a4ef" d="M10 29h7v7h-7z"/><path fill="#ffb900" d="M19 29h7v7h-7z"/></svg>
    </div>
    <div class="app">
      <svg viewBox="0 0 36 44" class="app-ic"><path fill="#0a5fb3" d="M18 0l18 14H0z"/><path fill="#29b2e8" d="M0 14h36v30H0z"/><path fill="#f4f8fb" d="M0 12h36L18 28z"/><path fill="#0f85d1" d="M0 14l18 30H0z"/></svg>
    </div>
    <div class="app app-on">
      <svg viewBox="0 0 38 38" class="app-ic"><path fill="#0065a9" d="M28 1l9 4v28l-9 4-16-15-7 5-4-2v-12l4-2 7 5z"/><path fill="#007acc" d="M28 10L16 19l12 9z"/><path fill="#1f9cf0" d="M28 1l9 4v28l-9 4z"/></svg>
    </div>
    <div class="app app-cc">
      <svg viewBox="0 0 34 42" class="app-ic"><defs><linearGradient id="cc" x1="0" y1="0" x2="1" y2="1"><stop offset="0" stop-color="#ff2a00"/><stop offset=".4" stop-color="#f0208e"/><stop offset=".7" stop-color="#8e3de0"/><stop offset="1" stop-color="#34c76f"/></linearGradient></defs><rect width="34" height="40" y="1" rx="6" fill="url(#cc)"/><path fill="none" stroke="#fff" stroke-width="2" d="M10 27a5 5 0 0 1 0-10c2-5 8-6 12-2 5 0 7 3 6 7-1 3-3 5-6 5h-6l6-9"/></svg>
    </div>
    <div class="app app-chrome">
      <svg viewBox="0 0 40 40" class="app-ic"><circle cx="20" cy="20" r="20" fill="#e33b2e"/><path fill="#2da94f" d="M3 10L13 27l9 13C9 41 0 31 0 20c0-4 1-7 3-10z"/><path fill="#fcc934" d="M20 11h18c3 9 2 18-5 24-3 3-7 5-11 5l9-14c2-5 0-12-11-15z"/><circle cx="20" cy="20" r="10" fill="#fff"/><circle cx="20" cy="20" r="7.500" fill="#3a78e7"/></svg>
    </div>
    <div class="tray">
      <div class="weather">
        <svg viewBox="0 0 36 36" class="weather-ic"><defs><linearGradient id="sun" x1="0" y1="0" x2="0" y2="1"><stop offset="0" stop-color="#f6c23a"/><stop offset="1" stop-color="#ec7a10"/></linearGradient></defs><ellipse cx="14" cy="18" rx="14" ry="17" fill="url(#sun)"/><path fill="#cfe2f8" d="M14 28a5 5 0 0 1 0-10 6 6 0 0 1 11-2 6 6 0 0 1 7 6 3 3 0 0 1 0 6z"/></svg>
        <span class="weather-temp">35°F</span><span>Mostly sunny</span>
      </div>
      <div class="tray-cell"><svg viewBox="0 0 18 10" class="tray-ic"><path d="M1 9l8-8 8 8"/></svg></div>
      <div class="tray-cell"><svg viewBox="0 0 24 20" class="tray-ic tray-net"><path d="M6 1h17v13H6zM1 3h6v8H1zM15 14v3M10 18.500h10M4 11v4h8"/></svg></div>
      <div class="tray-cell"><svg viewBox="0 0 22 18" class="tray-ic tray-vol"><path d="M1 6h4l6-5v16l-6-5H1zM15 6l6 6M21 6l-6 6"/></svg></div>
      <div class="clock"><span>1:40 PM</span><span>12/8/2022</span></div>
      <div class="notify">
        <svg viewBox="0 0 24 26" class="notify-ic"><path d="M0 0h24v18H9l-3 5v-5H0z"/></svg>
        <span class="notify-badge">2</span>
      </div>
    </div>
  </footer>
</div>
</body>
</html>
```

FILE: styles.css
```css
* { box-sizing: border-box; }
html, body { margin: 0; padding: 0; }
body { width: 3840px; height: 2160px; overflow: hidden; font-family: "Open Sans", "Liberation Sans", sans-serif; }
.screen { width: 3840px; height: 2160px; display: flex; flex-direction: column; }

/* tab strip */
.tabstrip { height: 51px; flex: none; background: #dee1e6; display: flex; align-items: stretch; padding-left: 16px; }
.tab { position: relative; width: 356px; display: flex; align-items: center; padding: 0 16px; color: #3c4043; font-size: 17px; }
.tab-second { width: 359px; border-left: 0; }
.tab-second::before { content: ""; position: absolute; left: 0; top: 11px; bottom: 11px; width: 1px; background: #8e9094; }
.tab-active { width: 357px; background: #fff; border-radius: 14px 14px 0 0; color: #3c4043; }
.tab-active::before, .tab-active::after { content: ""; position: absolute; bottom: 0; width: 10px; height: 10px; }
.tab-active::before { left: -10px; background: radial-gradient(circle at 0 0, transparent 10px, #fff 10.500px); }
.tab-active::after { right: -10px; background: radial-gradient(circle at 100% 0, transparent 10px, #fff 10.500px); }
.favicon { width: 24px; height: 24px; flex: none; margin-right: 11px; }
.fav-b { fill: #f26d21; }
.fav-hole { fill: #dee1e6; }
.fav-canvas circle { stroke: #e4392b; }
.cube-a { fill: #3f3f3f; }
.cube-b { fill: #6d6d6d; }
.tab-title { flex: 1; white-space: nowrap; overflow: hidden; -webkit-mask-image: linear-gradient(90deg, #000 88%, transparent); mask-image: linear-gradient(90deg, #000 88%, transparent); letter-spacing: -.2px; }
.tab-close { width: 13px; height: 13px; flex: none; margin-left: 10px; fill: none; stroke: #45474a; stroke-width: 2; }
.new-tab { width: 17px; height: 17px; margin: 17px 0 0 24px; fill: none; stroke: #45474a; stroke-width: 2.200; }
.win-controls { margin-left: auto; display: flex; }
.win-cell { width: 69px; height: 42px; display: flex; align-items: center; justify-content: center; }
.win-ic { width: 15px; height: 15px; fill: none; stroke: #111; stroke-width: 1.100; }
.win-chev { stroke: #333; height: 9px; }

/* toolbar */
.toolbar { height: 56px; flex: none; background: #fff; border-bottom: 2px solid #d9d9d9; display: flex; align-items: center; padding: 0 9px 0 7px; }
.nav-cell { width: 50px; height: 42px; display: flex; align-items: center; justify-content: center; }
.nav-ic { width: 21px; height: 21px; fill: none; stroke: #5f6368; stroke-width: 2; }
.nav-off { stroke: #bdc1c6; }
.nav-solid { fill: #5f6368; stroke: none; }
.omnibox { flex: 1; height: 42px; margin: 0 9px 0 7px; background: #f1f3f4; border-radius: 21px; display: flex; align-items: center; padding-left: 17px; }
.lock { width: 13px; height: 18px; fill: #5f6368; flex: none; margin-right: 20px; }
.lock-arc { fill: none; stroke: #5f6368; stroke-width: 1.600; }
.url { font-size: 20.200px; color: #5f6368; white-space: nowrap; letter-spacing: -.15px; }
.url-host { color: #202124; }
.omni-icons { margin-left: auto; display: flex; padding-right: 3px; }
.omni-cell { width: 47px; height: 42px; display: flex; align-items: center; justify-content: center; }
.ic-key { width: 22px; height: 12px; fill: #5f6368; }
.ic-line { width: 24px; height: 21px; fill: none; stroke: #5f6368; stroke-width: 1.600; }
.ic-star { width: 24px; height: 24px; fill: none; stroke: #5f6368; stroke-width: 2.200; }
.tool-cell { width: 48px; height: 42px; display: flex; align-items: center; justify-content: center; }
.ic-panel { width: 21px; height: 21px; fill: #5f6368; }
.avatar { width: 33px; height: 33px; border-radius: 50%; background: #7e57c2; color: #fff; font-size: 17px; display: flex; align-items: center; justify-content: center; }
.dots { display: flex; flex-direction: column; gap: 4px; }
.dots i { display: block; width: 5px; height: 5px; border-radius: 50%; background: #5f6368; }

/* page */
.viewport { position: relative; flex: 1; min-height: 0; display: flex; background: #ff5636; overflow: hidden; }
.page { width: 3815px; flex: none; display: flex; flex-direction: column; align-items: center; padding-top: 67px; }
.copy { text-align: center; color: #fff; font-family: "Liberation Sans", sans-serif; font-size: 28px; line-height: 38.800px; height: 630px; }
.copy p { margin: 0 0 20px; white-space: nowrap; transform: scaleX(.745); }
.map { width: 1915px; height: 1003px; flex: none; display: block; }

.scrollbar { position: relative; flex: 1; background: #f1f1f1; border-left: 2px solid #fff; display: flex; flex-direction: column; padding-top: 612px; }
.scroll-thumb { display: block; width: 21px; height: 780px; background: #c1c1c1; margin-left: 0; }
.scroll-down { position: absolute; left: 6px; bottom: 6px; width: 0; height: 0; border: 5px solid transparent; border-top: 6px solid #505050; border-bottom: 0; }
.fold { position: absolute; right: 0; top: 0; width: 95px; height: 85px; background: #fff; clip-path: polygon(0 0, 100% 0, 100% 100%, 88px 100%, 70px 70px); }
.fold-arrow { position: absolute; left: 59px; top: 18px; width: 18px; height: 18px; fill: none; stroke: #333; stroke-width: 3; }

/* map */
.m-base { fill: #f5f5f5; }
.m-farm { fill: #cdcdcd; }
.m-farm2 { fill: #dadada; }
.m-pale { fill: #f3f3f3; }
.m-soft { fill: #dcdcdc; }
.m-deep { fill: #bfbfbf; }
.m-band { fill: #ebebeb; }
.m-band2 { fill: #f1f1f1; }
.m-patch { fill: #e3e3e3; }
.m-patch2 { fill: #e8e8e8; }
.m-hill { fill: #e1e1e1; }
.m-hill2 { fill: #e9e9e9; }
.m-shade1 { fill: #000; opacity: .08; }
.m-shade2 { fill: #bdbdbd; }
.m-shade3 { fill: #000; opacity: .07; }
.m-shade-lite { fill: #cfcfcf; }
.m-tex { fill: #000; opacity: .09; }
.m-grid { fill: none; stroke: #fff; stroke-width: 2.500; }
.m-road, .m-roadlite, .m-trail, .m-stream, .m-river, .m-hw, .m-hw-edge, .m-hw-white { fill: none; vector-effect: non-scaling-stroke; stroke-linejoin: round; stroke-linecap: round; }
.m-road { stroke: #fff; stroke-width: 3px; }
.m-roadlite { stroke: #e6e6e6; stroke-width: 1.500px; }
.m-trail { stroke: #fff; stroke-width: 1.300px; }
.m-stream { stroke: #7a7a7a; stroke-width: 1.200px; }
.m-river { stroke: #6b6b6b; stroke-width: 2.200px; }
.m-water { fill: #6b6b6b; }
.m-hw-edge { stroke: #fff; stroke-width: 8px; }
.m-hw { stroke: #bcbcbc; stroke-width: 4.500px; }
.m-hw-white { stroke: #fff; stroke-width: 3.500px; }
.shield rect, .shield use { fill: #fff; stroke: #aaa; stroke-width: 1.300px; }
.shield-sq rect { fill: #fff; stroke: #aaa; stroke-width: 1.300px; }
.shield-i use { fill: #8a8a8a; stroke: #fff; stroke-width: 1.500px; }
.shield text, .shield-sq text, .shield-i text { font-family: Roboto, sans-serif; font-size: 14.500px; text-anchor: middle; fill: #5a5a5a; }
.shield-i text { fill: #fff; font-size: 15px; }
.m-attr { fill: #fff; opacity: .72; }
.m-attr-sep { stroke: #fff; stroke-width: 1.500; }
.attr { font-family: Roboto, sans-serif; font-size: 15.500px; fill: #3c3c3c; }
.g-logo { font-family: "Liberation Sans", sans-serif; font-weight: 700; font-size: 27px; letter-spacing: -.5px; fill: #a8a8a8; stroke: #fff; stroke-width: 3px; paint-order: stroke; stroke-linejoin: round; }
.lb text { font-family: Roboto, sans-serif; font-size: 20.500px; fill: #5d5d5d; text-anchor: middle; stroke: #fff; stroke-width: 3px; stroke-linejoin: round; paint-order: stroke; }
.lb text.end { text-anchor: end; }
.lb text.start { text-anchor: start; }
.lb text.pale { fill: #818181; }
.lb text.small { font-size: 16px; }
.lb text.dark { fill: #2c2c2c; }
.lb text.city { fill: #202020; font-size: 27px; font-weight: 500; }
.hood text { font-family: Roboto, sans-serif; font-size: 14.500px; fill: #747474; letter-spacing: 1.100px; text-anchor: middle; stroke: #fff; stroke-width: 2px; stroke-linejoin: round; paint-order: stroke; font-weight: 500; }
.pin-park { fill: #5a5a5a; }
.pin-mid { fill: #666; }
.pin-shop { fill: #818181; }
.pin-shop-lt { fill: #9a9a9a; }
.pin-main { fill: #1f1f1f; }
.gly { fill: #fff; }
.gly-line { fill: none; stroke: #fff; stroke-width: 1.800; }
.gly-dark { fill: none; stroke: #888; stroke-width: 1.300; }

/* taskbar */
.taskbar { height: 60px; flex: none; display: flex; align-items: stretch; background: linear-gradient(90deg, #233a45 0%, #223845 30%, #1c2c45 70%, #1b2945 100%); color: #fff; }
.start { width: 73px; display: flex; align-items: center; justify-content: center; }
.win-logo { width: 25px; height: 24px; fill: #fff; }
.search { width: 514px; margin-top: 1px; margin-bottom: 2px; background: #f2f2f2; border: 2px solid #c9c9c9; display: flex; align-items: center; padding-left: 18px; color: #1f1f1f; position: relative; }
.search-ic { width: 22px; height: 22px; fill: none; stroke: #222; stroke-width: 2; flex: none; margin-right: 18px; }
.search-text { font-size: 21.500px; letter-spacing: -.2px; }
.search-art { margin-left: auto; margin-right: 5px; width: 110px; height: 52px; }
.task-cell { width: 73px; display: flex; align-items: center; justify-content: center; }
.cortana { width: 21px; height: 23px; border: 4px solid #fff; border-radius: 50%; }
.taskview { width: 24px; height: 26px; fill: none; stroke: #fff; stroke-width: 1.300; }
.app { width: 75px; display: flex; align-items: center; justify-content: center; position: relative; }
.app-first { margin-left: 2px; }
.app-on::after { content: ""; position: absolute; left: 8px; right: 8px; bottom: 0; height: 3px; background: #76b9ed; }
.app-ic { width: 36px; height: 40px; }
.app-cc { background: #a86a3a; border-bottom: 3px solid #f07d12; margin: 0 2px; width: 73px; }
.app-chrome { background: #4f626b; border-bottom: 3px solid #76b9ed; width: 72px; margin-left: 2px; }
.tray { margin-left: auto; width: 542px; display: flex; align-items: stretch; font-size: 21px; }
.weather { width: 250px; display: flex; align-items: center; flex: none; white-space: nowrap; }
.weather-ic { width: 34px; height: 34px; margin-right: 12px; flex: none; }
.weather-temp { width: 53px; flex: none; letter-spacing: -.6px; }
.tray-cell { width: 36px; display: flex; align-items: center; justify-content: center; flex: none; }
.tray-ic { width: 19px; height: 11px; fill: none; stroke: #fff; stroke-width: 1.300; }
.tray-net { width: 24px; height: 20px; }
.tray-vol { width: 22px; height: 18px; }
.clock { width: 108px; flex: none; display: flex; flex-direction: column; align-items: center; justify-content: center; font-size: 17.500px; line-height: 29px; }
.notify { position: relative; width: 56px; flex: none; }
.notify-ic { position: absolute; left: 16px; top: 14px; width: 24px; height: 26px; fill: #fff; }
.notify-badge { position: absolute; left: 27px; top: 30px; width: 25px; height: 25px; border-radius: 50%; background: #333; border: 1px solid #777; color: #fff; font-size: 17px; font-weight: 600; display: flex; align-items: center; justify-content: center; }
```
